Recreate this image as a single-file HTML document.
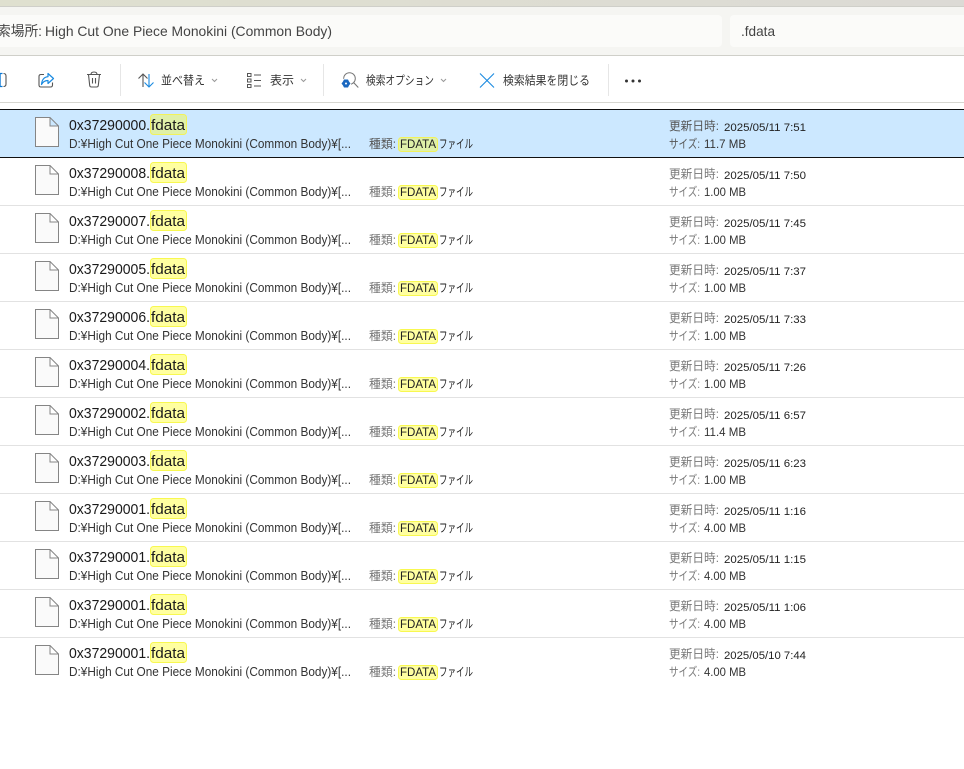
<!DOCTYPE html>
<html lang="ja"><head><meta charset="utf-8"><title>検索</title>
<style>
html,body{margin:0;padding:0;background:#fff;width:964px;height:769px;overflow:hidden}
svg{display:block;position:absolute;left:0;top:0}
text{font-family:"Liberation Sans","Noto Sans CJK JP",sans-serif;white-space:pre}
.n{font-size:15px;fill:#1a1a1a}
.p{font-size:12.500px;fill:#333}
.k{font-size:12px;fill:#555}
.f{font-size:12px;fill:#222}
.l{font-size:12px;fill:#777}
.v{font-size:11px;fill:#222}
.s{font-size:12px;fill:#333}
.t{font-size:12px;fill:#333}
.a{font-size:14px;fill:#444}
.hl{fill:#ffffa0;stroke:#f8f850}
.hs{fill:#dff0a8;stroke:#f2f25a}
.ic{fill:#fafafa;stroke:#858585}
</style></head><body>
<svg width="964" height="769" viewBox="0 0 964 769" xmlns="http://www.w3.org/2000/svg">
<defs><linearGradient id="g" x1="0" x2="1" y1="0" y2="0"><stop offset="0" stop-color="#dfe0cf"/><stop offset="1" stop-color="#dcdad5"/></linearGradient></defs>
<rect width="964" height="769" fill="#fff"/>
<rect width="964" height="6" fill="url(#g)"/>
<rect y="6" width="964" height="1" fill="#cfcfc9"/>
<rect y="7" width="964" height="48" fill="#f5f5f2"/>
<rect x="-10" y="15" width="732" height="32" rx="4" fill="#fbfbf9"/>
<rect x="730" y="15" width="244" height="32" rx="4" fill="#fbfbf9"/>
<rect y="55" width="964" height="1" fill="#cfcfc9"/>
<text class="a" x="-3" y="36" textLength="45" lengthAdjust="spacingAndGlyphs">索場所:</text>
<text class="a" x="45" y="36" textLength="287" lengthAdjust="spacingAndGlyphs">High Cut One Piece Monokini (Common Body)</text>
<text class="a" x="741" y="36" textLength="34" lengthAdjust="spacingAndGlyphs">.fdata</text>

<rect x="120" y="64" width="1" height="32" fill="#e6e6e6"/>
<rect x="323" y="64" width="1" height="32" fill="#e6e6e6"/>
<rect x="608" y="64" width="1" height="32" fill="#e6e6e6"/>
<rect y="102" width="964" height="1" fill="#d6d6d0"/>

<!-- toolbar icons -->
<path d="M0 73.500h2.500M0 86.500h2.500" stroke="#0a78d4" stroke-width="1.200" fill="none"/><path d="M0 73v14" stroke="#0a78d4" stroke-width="1.400"/>
<path d="M3.500 73.500c1.600 0 2.500 1 2.500 2.500v8c0 1.500-.9 2.500-2.500 2.500" stroke="#555" stroke-width="1.100" fill="none"/>
<path d="M44 74.500h-3c-1.300 0-2 .7-2 2v8.500c0 1.300.7 2 2 2h9.500c1.300 0 2-.7 2-2v-2.500" stroke="#555" stroke-width="1.100" fill="none"/>
<path d="M48 73.500l5.500 5-5.500 5v-3c-3 0-5 1-6.500 4 .4-4.500 2.500-7.500 6.500-7.800z" stroke="#1a8ae0" stroke-width="1.200" fill="#fff" stroke-linejoin="round"/>
<path d="M87 74.500h14M91 74.500c0-2 1.200-2.500 3-2.500s3 .5 3 2.500M88.500 74.500l1.200 11c.1 1 .8 1.500 1.800 1.500h5c1 0 1.700-.5 1.800-1.500l1.200-11M92.500 78v5.500M95.500 78v5.500" stroke="#555" stroke-width="1.100" fill="none"/>
<path d="M143 87V74M138.500 78.500l4.500-4.500 4.500 4.500" stroke="#555" stroke-width="1.100" fill="none"/>
<path d="M149 74v13M144.500 82.500l4.500 4.500 4.500-4.500" stroke="#1a8ae0" stroke-width="1.100" fill="none"/>
<path d="M247.500 73.500h3.500v3h-3.500zM247.500 79h3.500v3h-3.500zM247.500 84.500h3.500v3h-3.500z" stroke="#555" stroke-width="1" fill="none"/>
<path d="M254 75h7M254 80.500h7M254 86h7" stroke="#555" stroke-width="1.100" fill="none"/>
<circle cx="349.500" cy="78.500" r="5.800" stroke="#777" stroke-width="1" fill="none"/>
<path d="M353.800 82.800l4.500 4.700" stroke="#777" stroke-width="1.100"/>
<circle cx="346" cy="83.500" r="5.200" fill="#fff"/>
<path d="M344 79.500h4l1 2 1.500 2-1.500 2-1 2h-4l-1-2-1.500-2 1.500-2z" fill="#1a68c0"/>
<circle cx="346" cy="83.500" r="1" fill="#fff"/>
<path d="M480 73.500l14 14M494 73.500l-14 14" stroke="#1a8ae0" stroke-width="1.100" fill="none"/>
<circle cx="626.500" cy="81" r="1.500" fill="#333"/><circle cx="633" cy="81" r="1.500" fill="#333"/><circle cx="639.500" cy="81" r="1.500" fill="#333"/>
<path d="M212 79l2.500 2.500 2.500-2.500M301 79l2.500 2.500 2.500-2.500M441 79l2.500 2.500 2.500-2.500" stroke="#999" stroke-width="1" fill="none"/>
<text class="t" x="161" y="84.500" textLength="44" lengthAdjust="spacingAndGlyphs">並べ替え</text>
<text class="t" x="270" y="84.500" textLength="24" lengthAdjust="spacingAndGlyphs">表示</text>
<text class="t" x="366" y="84.500" textLength="68" lengthAdjust="spacingAndGlyphs">検索オプション</text>
<text class="t" x="503" y="84.500" textLength="87" lengthAdjust="spacingAndGlyphs">検索結果を閉じる</text>

<!-- selected row -->
<rect y="109" width="964" height="49" fill="#cce8ff"/>
<rect y="109" width="964" height="1" fill="#111"/>
<rect y="157" width="964" height="1" fill="#111"/>

<!-- row separators -->
<path d="M0 205.500H964M0 253.500H964M0 301.500H964M0 349.500H964M0 397.500H964M0 445.500H964M0 493.500H964M0 541.500H964M0 589.500H964M0 637.500H964" stroke="#e2e2e2" stroke-width="1"/>

<!-- Row 1 -->
<g>
<path class="ic" d="M35.500 117.500H50L58.500 126V146.500H35.500ZM50 117.500V126H58.500"/>
<rect class="hs" x="150.500" y="114.500" width="36" height="20" rx="3"/>
<text class="n" x="69" y="130" textLength="81" lengthAdjust="spacingAndGlyphs">0x37290000.</text><text class="n" x="151" y="130" textLength="34" lengthAdjust="spacingAndGlyphs">fdata</text>
<text class="p" x="69" y="148" textLength="282" lengthAdjust="spacingAndGlyphs">D:¥High Cut One Piece Monokini (Common Body)¥[...</text>
<text class="k" x="369" y="148" textLength="27" lengthAdjust="spacingAndGlyphs">種類:</text>
<rect class="hs" x="398.500" y="137.500" width="39" height="14" rx="3"/>
<text class="f" x="400" y="148" textLength="36" lengthAdjust="spacingAndGlyphs">FDATA</text><text class="f" x="439" y="148" textLength="34" lengthAdjust="spacingAndGlyphs">ファイル</text>
<text class="k" x="669" y="130" textLength="50" lengthAdjust="spacingAndGlyphs">更新日時:</text><text class="v" x="724" y="131" textLength="82" lengthAdjust="spacingAndGlyphs">2025/05/11 7:51</text>
<text class="k" x="669" y="148" textLength="31" lengthAdjust="spacingAndGlyphs">サイズ:</text><text class="s" x="704" y="148" textLength="42" lengthAdjust="spacingAndGlyphs">11.7 MB</text>
</g>
<!-- Row 2 -->
<g transform="translate(0,48)">
<path class="ic" d="M35.500 117.500H50L58.500 126V146.500H35.500ZM50 117.500V126H58.500"/>
<rect class="hl" x="150.500" y="114.500" width="36" height="20" rx="3"/>
<text class="n" x="69" y="130" textLength="81" lengthAdjust="spacingAndGlyphs">0x37290008.</text><text class="n" x="151" y="130" textLength="34" lengthAdjust="spacingAndGlyphs">fdata</text>
<text class="p" x="69" y="148" textLength="282" lengthAdjust="spacingAndGlyphs">D:¥High Cut One Piece Monokini (Common Body)¥[...</text>
<text class="l" x="369" y="148" textLength="27" lengthAdjust="spacingAndGlyphs">種類:</text>
<rect class="hl" x="398.500" y="137.500" width="39" height="14" rx="3"/>
<text class="f" x="400" y="148" textLength="36" lengthAdjust="spacingAndGlyphs">FDATA</text><text class="f" x="439" y="148" textLength="34" lengthAdjust="spacingAndGlyphs">ファイル</text>
<text class="l" x="669" y="130" textLength="50" lengthAdjust="spacingAndGlyphs">更新日時:</text><text class="v" x="724" y="131" textLength="82" lengthAdjust="spacingAndGlyphs">2025/05/11 7:50</text>
<text class="l" x="669" y="148" textLength="31" lengthAdjust="spacingAndGlyphs">サイズ:</text><text class="s" x="704" y="148" textLength="42" lengthAdjust="spacingAndGlyphs">1.00 MB</text>
</g>
<!-- Row 3 -->
<g transform="translate(0,96)">
<path class="ic" d="M35.500 117.500H50L58.500 126V146.500H35.500ZM50 117.500V126H58.500"/>
<rect class="hl" x="150.500" y="114.500" width="36" height="20" rx="3"/>
<text class="n" x="69" y="130" textLength="81" lengthAdjust="spacingAndGlyphs">0x37290007.</text><text class="n" x="151" y="130" textLength="34" lengthAdjust="spacingAndGlyphs">fdata</text>
<text class="p" x="69" y="148" textLength="282" lengthAdjust="spacingAndGlyphs">D:¥High Cut One Piece Monokini (Common Body)¥[...</text>
<text class="l" x="369" y="148" textLength="27" lengthAdjust="spacingAndGlyphs">種類:</text>
<rect class="hl" x="398.500" y="137.500" width="39" height="14" rx="3"/>
<text class="f" x="400" y="148" textLength="36" lengthAdjust="spacingAndGlyphs">FDATA</text><text class="f" x="439" y="148" textLength="34" lengthAdjust="spacingAndGlyphs">ファイル</text>
<text class="l" x="669" y="130" textLength="50" lengthAdjust="spacingAndGlyphs">更新日時:</text><text class="v" x="724" y="131" textLength="82" lengthAdjust="spacingAndGlyphs">2025/05/11 7:45</text>
<text class="l" x="669" y="148" textLength="31" lengthAdjust="spacingAndGlyphs">サイズ:</text><text class="s" x="704" y="148" textLength="42" lengthAdjust="spacingAndGlyphs">1.00 MB</text>
</g>
<!-- Row 4 -->
<g transform="translate(0,144)">
<path class="ic" d="M35.500 117.500H50L58.500 126V146.500H35.500ZM50 117.500V126H58.500"/>
<rect class="hl" x="150.500" y="114.500" width="36" height="20" rx="3"/>
<text class="n" x="69" y="130" textLength="81" lengthAdjust="spacingAndGlyphs">0x37290005.</text><text class="n" x="151" y="130" textLength="34" lengthAdjust="spacingAndGlyphs">fdata</text>
<text class="p" x="69" y="148" textLength="282" lengthAdjust="spacingAndGlyphs">D:¥High Cut One Piece Monokini (Common Body)¥[...</text>
<text class="l" x="369" y="148" textLength="27" lengthAdjust="spacingAndGlyphs">種類:</text>
<rect class="hl" x="398.500" y="137.500" width="39" height="14" rx="3"/>
<text class="f" x="400" y="148" textLength="36" lengthAdjust="spacingAndGlyphs">FDATA</text><text class="f" x="439" y="148" textLength="34" lengthAdjust="spacingAndGlyphs">ファイル</text>
<text class="l" x="669" y="130" textLength="50" lengthAdjust="spacingAndGlyphs">更新日時:</text><text class="v" x="724" y="131" textLength="82" lengthAdjust="spacingAndGlyphs">2025/05/11 7:37</text>
<text class="l" x="669" y="148" textLength="31" lengthAdjust="spacingAndGlyphs">サイズ:</text><text class="s" x="704" y="148" textLength="42" lengthAdjust="spacingAndGlyphs">1.00 MB</text>
</g>
<!-- Row 5 -->
<g transform="translate(0,192)">
<path class="ic" d="M35.500 117.500H50L58.500 126V146.500H35.500ZM50 117.500V126H58.500"/>
<rect class="hl" x="150.500" y="114.500" width="36" height="20" rx="3"/>
<text class="n" x="69" y="130" textLength="81" lengthAdjust="spacingAndGlyphs">0x37290006.</text><text class="n" x="151" y="130" textLength="34" lengthAdjust="spacingAndGlyphs">fdata</text>
<text class="p" x="69" y="148" textLength="282" lengthAdjust="spacingAndGlyphs">D:¥High Cut One Piece Monokini (Common Body)¥[...</text>
<text class="l" x="369" y="148" textLength="27" lengthAdjust="spacingAndGlyphs">種類:</text>
<rect class="hl" x="398.500" y="137.500" width="39" height="14" rx="3"/>
<text class="f" x="400" y="148" textLength="36" lengthAdjust="spacingAndGlyphs">FDATA</text><text class="f" x="439" y="148" textLength="34" lengthAdjust="spacingAndGlyphs">ファイル</text>
<text class="l" x="669" y="130" textLength="50" lengthAdjust="spacingAndGlyphs">更新日時:</text><text class="v" x="724" y="131" textLength="82" lengthAdjust="spacingAndGlyphs">2025/05/11 7:33</text>
<text class="l" x="669" y="148" textLength="31" lengthAdjust="spacingAndGlyphs">サイズ:</text><text class="s" x="704" y="148" textLength="42" lengthAdjust="spacingAndGlyphs">1.00 MB</text>
</g>
<!-- Row 6 -->
<g transform="translate(0,240)">
<path class="ic" d="M35.500 117.500H50L58.500 126V146.500H35.500ZM50 117.500V126H58.500"/>
<rect class="hl" x="150.500" y="114.500" width="36" height="20" rx="3"/>
<text class="n" x="69" y="130" textLength="81" lengthAdjust="spacingAndGlyphs">0x37290004.</text><text class="n" x="151" y="130" textLength="34" lengthAdjust="spacingAndGlyphs">fdata</text>
<text class="p" x="69" y="148" textLength="282" lengthAdjust="spacingAndGlyphs">D:¥High Cut One Piece Monokini (Common Body)¥[...</text>
<text class="l" x="369" y="148" textLength="27" lengthAdjust="spacingAndGlyphs">種類:</text>
<rect class="hl" x="398.500" y="137.500" width="39" height="14" rx="3"/>
<text class="f" x="400" y="148" textLength="36" lengthAdjust="spacingAndGlyphs">FDATA</text><text class="f" x="439" y="148" textLength="34" lengthAdjust="spacingAndGlyphs">ファイル</text>
<text class="l" x="669" y="130" textLength="50" lengthAdjust="spacingAndGlyphs">更新日時:</text><text class="v" x="724" y="131" textLength="82" lengthAdjust="spacingAndGlyphs">2025/05/11 7:26</text>
<text class="l" x="669" y="148" textLength="31" lengthAdjust="spacingAndGlyphs">サイズ:</text><text class="s" x="704" y="148" textLength="42" lengthAdjust="spacingAndGlyphs">1.00 MB</text>
</g>
<!-- Row 7 -->
<g transform="translate(0,288)">
<path class="ic" d="M35.500 117.500H50L58.500 126V146.500H35.500ZM50 117.500V126H58.500"/>
<rect class="hl" x="150.500" y="114.500" width="36" height="20" rx="3"/>
<text class="n" x="69" y="130" textLength="81" lengthAdjust="spacingAndGlyphs">0x37290002.</text><text class="n" x="151" y="130" textLength="34" lengthAdjust="spacingAndGlyphs">fdata</text>
<text class="p" x="69" y="148" textLength="282" lengthAdjust="spacingAndGlyphs">D:¥High Cut One Piece Monokini (Common Body)¥[...</text>
<text class="l" x="369" y="148" textLength="27" lengthAdjust="spacingAndGlyphs">種類:</text>
<rect class="hl" x="398.500" y="137.500" width="39" height="14" rx="3"/>
<text class="f" x="400" y="148" textLength="36" lengthAdjust="spacingAndGlyphs">FDATA</text><text class="f" x="439" y="148" textLength="34" lengthAdjust="spacingAndGlyphs">ファイル</text>
<text class="l" x="669" y="130" textLength="50" lengthAdjust="spacingAndGlyphs">更新日時:</text><text class="v" x="724" y="131" textLength="82" lengthAdjust="spacingAndGlyphs">2025/05/11 6:57</text>
<text class="l" x="669" y="148" textLength="31" lengthAdjust="spacingAndGlyphs">サイズ:</text><text class="s" x="704" y="148" textLength="42" lengthAdjust="spacingAndGlyphs">11.4 MB</text>
</g>
<!-- Row 8 -->
<g transform="translate(0,336)">
<path class="ic" d="M35.500 117.500H50L58.500 126V146.500H35.500ZM50 117.500V126H58.500"/>
<rect class="hl" x="150.500" y="114.500" width="36" height="20" rx="3"/>
<text class="n" x="69" y="130" textLength="81" lengthAdjust="spacingAndGlyphs">0x37290003.</text><text class="n" x="151" y="130" textLength="34" lengthAdjust="spacingAndGlyphs">fdata</text>
<text class="p" x="69" y="148" textLength="282" lengthAdjust="spacingAndGlyphs">D:¥High Cut One Piece Monokini (Common Body)¥[...</text>
<text class="l" x="369" y="148" textLength="27" lengthAdjust="spacingAndGlyphs">種類:</text>
<rect class="hl" x="398.500" y="137.500" width="39" height="14" rx="3"/>
<text class="f" x="400" y="148" textLength="36" lengthAdjust="spacingAndGlyphs">FDATA</text><text class="f" x="439" y="148" textLength="34" lengthAdjust="spacingAndGlyphs">ファイル</text>
<text class="l" x="669" y="130" textLength="50" lengthAdjust="spacingAndGlyphs">更新日時:</text><text class="v" x="724" y="131" textLength="82" lengthAdjust="spacingAndGlyphs">2025/05/11 6:23</text>
<text class="l" x="669" y="148" textLength="31" lengthAdjust="spacingAndGlyphs">サイズ:</text><text class="s" x="704" y="148" textLength="42" lengthAdjust="spacingAndGlyphs">1.00 MB</text>
</g>
<!-- Row 9 -->
<g transform="translate(0,384)">
<path class="ic" d="M35.500 117.500H50L58.500 126V146.500H35.500ZM50 117.500V126H58.500"/>
<rect class="hl" x="150.500" y="114.500" width="36" height="20" rx="3"/>
<text class="n" x="69" y="130" textLength="81" lengthAdjust="spacingAndGlyphs">0x37290001.</text><text class="n" x="151" y="130" textLength="34" lengthAdjust="spacingAndGlyphs">fdata</text>
<text class="p" x="69" y="148" textLength="282" lengthAdjust="spacingAndGlyphs">D:¥High Cut One Piece Monokini (Common Body)¥[...</text>
<text class="l" x="369" y="148" textLength="27" lengthAdjust="spacingAndGlyphs">種類:</text>
<rect class="hl" x="398.500" y="137.500" width="39" height="14" rx="3"/>
<text class="f" x="400" y="148" textLength="36" lengthAdjust="spacingAndGlyphs">FDATA</text><text class="f" x="439" y="148" textLength="34" lengthAdjust="spacingAndGlyphs">ファイル</text>
<text class="l" x="669" y="130" textLength="50" lengthAdjust="spacingAndGlyphs">更新日時:</text><text class="v" x="724" y="131" textLength="82" lengthAdjust="spacingAndGlyphs">2025/05/11 1:16</text>
<text class="l" x="669" y="148" textLength="31" lengthAdjust="spacingAndGlyphs">サイズ:</text><text class="s" x="704" y="148" textLength="42" lengthAdjust="spacingAndGlyphs">4.00 MB</text>
</g>
<!-- Row 10 -->
<g transform="translate(0,432)">
<path class="ic" d="M35.500 117.500H50L58.500 126V146.500H35.500ZM50 117.500V126H58.500"/>
<rect class="hl" x="150.500" y="114.500" width="36" height="20" rx="3"/>
<text class="n" x="69" y="130" textLength="81" lengthAdjust="spacingAndGlyphs">0x37290001.</text><text class="n" x="151" y="130" textLength="34" lengthAdjust="spacingAndGlyphs">fdata</text>
<text class="p" x="69" y="148" textLength="282" lengthAdjust="spacingAndGlyphs">D:¥High Cut One Piece Monokini (Common Body)¥[...</text>
<text class="l" x="369" y="148" textLength="27" lengthAdjust="spacingAndGlyphs">種類:</text>
<rect class="hl" x="398.500" y="137.500" width="39" height="14" rx="3"/>
<text class="f" x="400" y="148" textLength="36" lengthAdjust="spacingAndGlyphs">FDATA</text><text class="f" x="439" y="148" textLength="34" lengthAdjust="spacingAndGlyphs">ファイル</text>
<text class="l" x="669" y="130" textLength="50" lengthAdjust="spacingAndGlyphs">更新日時:</text><text class="v" x="724" y="131" textLength="82" lengthAdjust="spacingAndGlyphs">2025/05/11 1:15</text>
<text class="l" x="669" y="148" textLength="31" lengthAdjust="spacingAndGlyphs">サイズ:</text><text class="s" x="704" y="148" textLength="42" lengthAdjust="spacingAndGlyphs">4.00 MB</text>
</g>
<!-- Row 11 -->
<g transform="translate(0,480)">
<path class="ic" d="M35.500 117.500H50L58.500 126V146.500H35.500ZM50 117.500V126H58.500"/>
<rect class="hl" x="150.500" y="114.500" width="36" height="20" rx="3"/>
<text class="n" x="69" y="130" textLength="81" lengthAdjust="spacingAndGlyphs">0x37290001.</text><text class="n" x="151" y="130" textLength="34" lengthAdjust="spacingAndGlyphs">fdata</text>
<text class="p" x="69" y="148" textLength="282" lengthAdjust="spacingAndGlyphs">D:¥High Cut One Piece Monokini (Common Body)¥[...</text>
<text class="l" x="369" y="148" textLength="27" lengthAdjust="spacingAndGlyphs">種類:</text>
<rect class="hl" x="398.500" y="137.500" width="39" height="14" rx="3"/>
<text class="f" x="400" y="148" textLength="36" lengthAdjust="spacingAndGlyphs">FDATA</text><text class="f" x="439" y="148" textLength="34" lengthAdjust="spacingAndGlyphs">ファイル</text>
<text class="l" x="669" y="130" textLength="50" lengthAdjust="spacingAndGlyphs">更新日時:</text><text class="v" x="724" y="131" textLength="82" lengthAdjust="spacingAndGlyphs">2025/05/11 1:06</text>
<text class="l" x="669" y="148" textLength="31" lengthAdjust="spacingAndGlyphs">サイズ:</text><text class="s" x="704" y="148" textLength="42" lengthAdjust="spacingAndGlyphs">4.00 MB</text>
</g>
<!-- Row 12 -->
<g transform="translate(0,528)">
<path class="ic" d="M35.500 117.500H50L58.500 126V146.500H35.500ZM50 117.500V126H58.500"/>
<rect class="hl" x="150.500" y="114.500" width="36" height="20" rx="3"/>
<text class="n" x="69" y="130" textLength="81" lengthAdjust="spacingAndGlyphs">0x37290001.</text><text class="n" x="151" y="130" textLength="34" lengthAdjust="spacingAndGlyphs">fdata</text>
<text class="p" x="69" y="148" textLength="282" lengthAdjust="spacingAndGlyphs">D:¥High Cut One Piece Monokini (Common Body)¥[...</text>
<text class="l" x="369" y="148" textLength="27" lengthAdjust="spacingAndGlyphs">種類:</text>
<rect class="hl" x="398.500" y="137.500" width="39" height="14" rx="3"/>
<text class="f" x="400" y="148" textLength="36" lengthAdjust="spacingAndGlyphs">FDATA</text><text class="f" x="439" y="148" textLength="34" lengthAdjust="spacingAndGlyphs">ファイル</text>
<text class="l" x="669" y="130" textLength="50" lengthAdjust="spacingAndGlyphs">更新日時:</text><text class="v" x="724" y="131" textLength="82" lengthAdjust="spacingAndGlyphs">2025/05/10 7:44</text>
<text class="l" x="669" y="148" textLength="31" lengthAdjust="spacingAndGlyphs">サイズ:</text><text class="s" x="704" y="148" textLength="42" lengthAdjust="spacingAndGlyphs">4.00 MB</text>
</g>
</svg>
</body></html>
